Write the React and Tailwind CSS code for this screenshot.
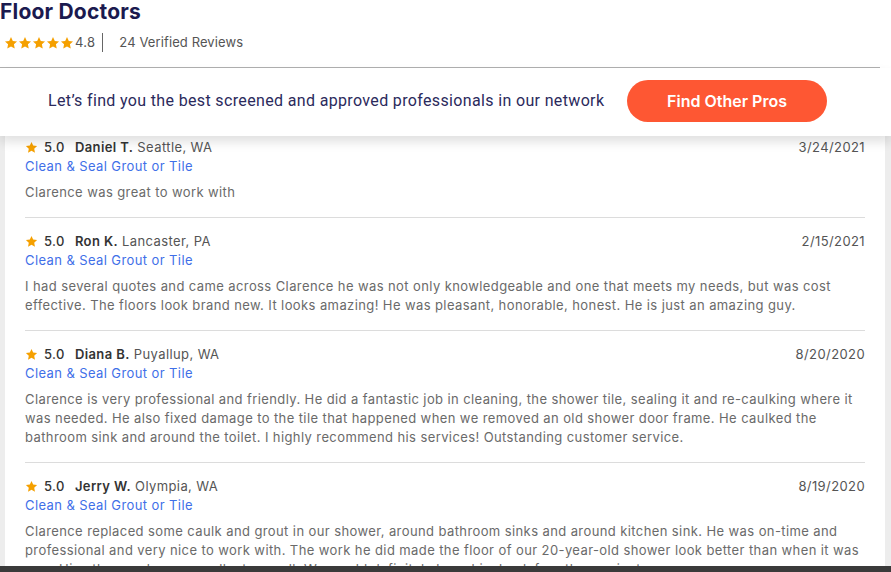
import React from 'react';

const reviews = [
  {
    id: 1,
    name: 'Daniel T.',
    city: 'Seattle, WA',
    date: '3/24/2021',
    text: 'Clarence was great to work with',
  },
  {
    id: 2,
    name: 'Ron K.',
    city: 'Lancaster, PA',
    date: '2/15/2021',
    text: 'I had several quotes and came across Clarence he was not only knowledgeable and one that meets my needs, but was cost effective. The floors look brand new. It looks amazing! He was pleasant, honorable, honest. He is just an amazing guy.',
  },
  {
    id: 3,
    name: 'Diana B.',
    city: 'Puyallup, WA',
    date: '8/20/2020',
    text: 'Clarence is very professional and friendly. He did a fantastic job in cleaning, the shower tile, sealing it and re-caulking where it was needed. He also fixed damage to the tile that happened when we removed an old shower door frame. He caulked the bathroom sink and around the toilet. I highly recommend his services! Outstanding customer service.',
  },
  {
    id: 4,
    name: 'Jerry W.',
    city: 'Olympia, WA',
    date: '8/19/2020',
    text: 'Clarence replaced some caulk and grout in our shower, around bathroom sinks and around kitchen sink. He was on-time and professional and very nice to work with. The work he did made the floor of our 20-year-old shower look better than when it was new. His other work was excellent as well. We would definitely have him back for other projects.',
  },
];

function Star({ size = 14, className = '' }) {
  return (
    <svg width={size} height={size} viewBox="0 0 24 24" className={className}>
      <path
        fill="currentColor"
        d="M12 1.8l3.1 6.6 7.2.9-5.3 5 1.4 7.2L12 18l-6.4 3.5 1.4-7.2-5.3-5 7.2-.9z"
      />
    </svg>
  );
}

export default function App() {
  return (
    <div className="w-[891px] h-[572px] overflow-hidden bg-white flex flex-col font-['Inter',sans-serif]">
      <header className="h-[67px] shrink-0">
        <h1 className="text-[21px] leading-[24px] font-bold text-[#1b1a4f] tracking-[0.2px]">Floor Doctors</h1>
        <div className="flex items-center mt-[9px] pl-[4px] h-[19px]">
          <div className="flex text-[#f5a000]">
            {[0, 1, 2, 3, 4].map((i) => (
              <Star key={i} size={14} />
            ))}
          </div>
          <span className="ml-[1px] text-[13px] tracking-[0.3px] text-[#555]">4.8</span>
          <span className="ml-[7px] w-px h-[19px] bg-[#666]" />
          <span className="ml-[16px] text-[13px] tracking-[0.1px] text-[#555]">24 Verified Reviews</span>
        </div>
      </header>

      <div className="w-[880px] h-px bg-[#b0b0b0] shrink-0" />

      <div className="relative z-10 h-[68px] shrink-0 bg-white flex items-center pb-[3px] shadow-[0_6px_10px_rgba(0,0,0,0.12)]">
        <p className="ml-[48px] w-[556px] whitespace-nowrap text-[16px] tracking-[0.35px] text-[#2b2a5c] font-['Roboto',sans-serif]">
          Let’s find you the best screened and approved professionals in our network
        </p>
        <button className="ml-[23px] w-[200px] h-[42px] rounded-full bg-[#fe5733] text-white text-[16px] font-semibold">
          Find Other Pros
        </button>
      </div>

      <div className="flex-1 min-h-0 bg-[#ededed] pl-[5px] pr-[6px] flex">
        <div className="flex-1 bg-white px-[20px] pt-[2px] tracking-[0.4px]">
          {reviews.map((r, idx) => (
            <div
              key={r.id}
              className={`pb-[15px] ${idx > 0 ? 'pt-[14px]' : ''} ${idx < reviews.length - 1 ? 'border-b border-[#dcdcdc]' : ''}`}
            >
              <div className="flex items-center justify-between text-[13px] leading-[19px]">
                <div className="flex items-center">
                  <Star size={13} className="text-[#f5a000]" />
                  <span className="ml-[6px] font-medium text-[#333]">5.0</span>
                  <span className="ml-[10px] font-semibold text-[#333]">{r.name}</span>
                  <span className="ml-[4px] text-[#555]">{r.city}</span>
                </div>
                <span className="text-[#555]">{r.date}</span>
              </div>
              <div className="text-[13px] leading-[19px] text-[#3f6fe8]">Clean &amp; Seal Grout or Tile</div>
              <p className="mt-[7px] text-[13px] leading-[19px] text-[#6a6a6a]">{r.text}</p>
            </div>
          ))}
        </div>
      </div>

      <div className="h-[6px] shrink-0 bg-[#3a3a3a]" />
    </div>
  );
}
